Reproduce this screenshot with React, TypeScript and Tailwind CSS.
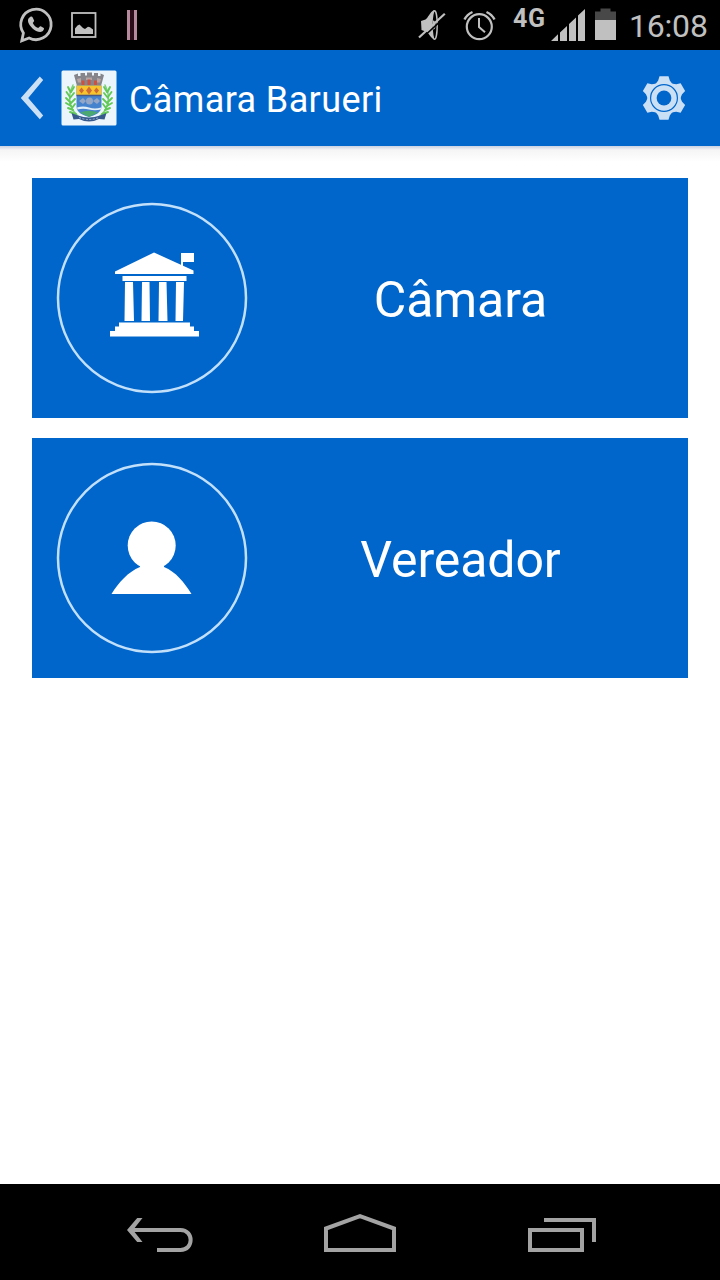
import type { ReactNode } from 'react';

const gearTeeth = [0, 60, 120, 180, 240, 300];

function StatusBar() {
  return (
    <div className="flex h-[50px] shrink-0 bg-black text-[#c0c0c0]">
      {/* Notifications */}
      <svg className="ml-4 h-[50px] w-10" viewBox="16 0 40 50" fill="none">
        <path
          d="M23.4 33A15.2 15.2 0 1 1 29.1 38L21.8 40.8Z"
          stroke="currentColor"
          strokeWidth="2.8"
        />
        <path
          d="M30.2 17C31 16.2 32.2 16.4 32.7 17.4L34.1 20.5C34.4 21.3 33.1 22.3 32.8 23C34 25.6 35.8 27.1 38.2 28C39 27.5 39.8 26 40.7 26.3L43.8 28C44.6 28.7 43.2 31 42 31.6C39.5 32.8 35 30.8 32.3 28.2C29.6 25.5 27.4 22.3 28.1 19.6C28.4 18.5 29.3 17.6 30.2 17Z"
          fill="currentColor"
        />
      </svg>
      <svg className="ml-[14px] h-[50px] w-7" viewBox="70 0 28 50" fill="none">
        <rect x="72" y="13" width="23.5" height="24" stroke="currentColor" strokeWidth="1.8" />
        <path
          d="M75 34V28.5L77.5 25.5L79.5 24.5L83 28L85 29L88 26.8L90 27.2L93 29.5V34Z"
          fill="currentColor"
        />
      </svg>
      <div className="mt-[10px] ml-[29px] flex h-[30px] w-[10px] justify-between bg-[#2a0d18]">
        <div className="w-[3px] bg-[#b58a9c]" />
        <div className="w-[3px] bg-[#b58a9c]" />
      </div>

      {/* System icons */}
      <svg className="ml-[279px] h-[50px] w-8" viewBox="416 0 32 50" fill="none">
        <path
          d="M421 21L425.500 19.5C428 18 430 12 434 10V39.5C431 38 429 34 427 32L421.5 30Z"
          fill="currentColor"
        />
        <ellipse cx="434.6" cy="25" rx="2.6" ry="14.3" fill="black" stroke="currentColor" strokeWidth="1.4" />
        <path d="M433 20.500A2.500 4.500 0 0 1 433 29.500Z" fill="currentColor" />
        <path d="M420.5 39.5L446 16.2" stroke="black" strokeWidth="1.6" />
        <path d="M419 37.5L444.8 13.8" stroke="currentColor" strokeWidth="2.2" />
      </svg>
      <svg className="ml-[14px] h-[50px] w-9" viewBox="462 0 36 50" fill="none" stroke="currentColor">
        <circle cx="479.3" cy="26.7" r="12.5" strokeWidth="2.2" />
        <path d="M479 18V27L485 32.2" strokeWidth="2" />
        <path d="M464.5 19.5Q467 14.5 472.5 12M486.5 12Q492 14.5 494.5 19.5" strokeWidth="2.4" />
      </svg>
      <span className="mt-[5px] ml-[15px] w-[38px] text-[25px] leading-7 font-bold tracking-[0.6px]">4G</span>
      <svg className="h-[50px] w-[34px]" viewBox="551 0 34 50" fill="currentColor">
        <path d="M551 41L558 34.3V41ZM560 32.5L567 26V41H560ZM569 24L576 17.5V41H569ZM578 15.5L585 9V41H578Z" />
      </svg>
      <svg className="ml-[10px] h-[50px] w-[21px]" viewBox="595 0 21 50">
        <path d="M595 20V11.5H600.5V8.5H610.5V11.5H616V20Z" fill="#484848" />
        <path d="M595 20H616V40H595Z" fill="currentColor" />
      </svg>
      <span className="mt-[7px] ml-[13px] text-[32px] leading-[38px] tracking-[-0.2px]">16:08</span>
    </div>
  );
}

function Crest() {
  return (
    <svg className="ml-4 h-14 w-14" viewBox="0 0 56 56" fill="none">
      <rect x="0.5" y="0.5" width="55" height="55" rx="1.5" fill="#edf5fc" />
      {/* Laurel branches */}
      <g stroke="#7fce7a" strokeWidth="1.5" strokeLinecap="round">
        <path d="M12 15C6 27 8 39 18 47M44 15C50 27 48 39 38 47" />
        <path
          d="M9.500 22L7 17M9 27L5.500 22M9 32L5 28M10 36L5 33M12 40L7 38M15 44L9 42M10 22L13 17M9 28L13 23M9 34L14 29M11 38L14 34"
          stroke="#62c956"
          strokeWidth="1.900"
        />
        <path
          d="M46.500 22L49 17M47 27L50.500 22M47 32L51 28M46 36L51 33M44 40L49 38M41 44L47 42M46 22L43 17M47 28L43 23M47 34L42 29M45 38L42 34"
          stroke="#62c956"
          strokeWidth="1.900"
        />
      </g>
      {/* Mural crown */}
      <path
        d="M13 5L17 3.500V6H19.500V3H24V5.500H26V2.500H31V5.500H33V3H37V6H39.500V3.500L43 5L40 16H16Z"
        fill="#85858b"
      />
      <path d="M16 9L20 8V12.500H17ZM25 7.500H31V10H25ZM36 8L40 9L39 12.500H36Z" fill="#b7a5a4" />
      <path d="M20.5 10.500H23.500V15H20.5ZM26.500 9.500H29.500V15H26.500ZM33 10.500H36V15H33Z" fill="#d0503f" />
      {/* Shield */}
      <path d="M15.500 15.500H40.500V36C40.500 43 34 45 28 47C22 45 15.500 43 15.500 36Z" fill="#4583ce" />
      <path d="M15.500 15.500H40.500V25H15.500Z" fill="#f7c42e" />
      <path d="M18 20.500L20.5 17.500L23 20.500L20.5 23.500ZM25 20.500L28 16.500L31 20.500L28 24.500ZM33 20.500L35.500 17.500L38 20.500L35.5 23.500Z" fill="#d06b36" />
      <path d="M15.500 24.700H40.500V26.200H15.500Z" fill="#4b5a86" />
      <path d="M18 31L22 28L25 31L22 34ZM25 31A3.5 3.5 0 1 1 32 31A3.5 3.5 0 1 1 25 31ZM32 31L36 28L39 31L36 34Z" fill="#94a6c6" />
      <path d="M16 37.500Q22 35.500 28 37.500T40 37.500V39.500Q34 41 28 39.500T16.500 39.500Z" fill="#e1eef8" />
      <path d="M19 42.500Q28 39 37 42.500L28 47Z" fill="#4aa870" />
      {/* Ribbon */}
      <path
        d="M10.500 43L17 45.500Q28 49.500 39 45.500L45.500 43L43.500 49.500L38 49Q28 54 18 49L12.500 49.500Z"
        fill="#365a8e"
      />
      <path d="M18 47.5Q28 51.5 38 47.5" stroke="#9fb2d0" strokeDasharray="2 1.5" />
    </svg>
  );
}

function ActionBar() {
  return (
    <header className="flex h-24 shrink-0 items-center bg-[#0066cc] text-white">
      <svg className="ml-5 h-12 w-[25px]" viewBox="20 74 25 48">
        <path d="M39.8 76.500L43.200 80L28.200 98L43.200 115.500L39.8 119.200L20.800 98Z" fill="#cce0f5" />
      </svg>
      <Crest />
      <h1 className="mt-[3px] ml-3 text-[36px] leading-[42px] tracking-[0.38px]">Câmara Barueri</h1>
      <svg className="mr-8 ml-auto h-12 w-12" viewBox="-24 -24 48 48" fill="#cce0f5">
        {gearTeeth.map((angle) => (
          <path key={angle} d="M-8 -14.500L-5.800 -17.500L-4.5 -21.800H4.5L5.800 -17.500L8 -14.500Z" transform={`rotate(${angle})`} />
        ))}
        <circle r="16.800" />
        <circle r="13.4" fill="none" stroke="#0066cc" strokeWidth="1.2" />
        <circle r="7.4" fill="#0066cc" />
      </svg>
    </header>
  );
}

function MenuCard({ label, children }: { label: string; children: ReactNode }) {
  return (
    <button className="flex h-60 w-full items-center bg-[#0066cc] text-white">
      <svg className="h-60 w-60 shrink-0" viewBox="0 0 240 240" fill="white">
        <circle cx="120" cy="120" r="94" fill="none" stroke="#c2e0fa" strokeWidth="2.5" />
        {children}
      </svg>
      <span className="flex-1 pt-1 pr-[39px] text-center text-[50px] leading-[60px] tracking-[-0.1px]">{label}</span>
    </button>
  );
}

function NavBar() {
  return (
    <nav className="flex h-24 shrink-0 items-center bg-black text-[#a3a3a3]">
      <svg className="ml-[126px] h-24 w-[68px]" viewBox="126 1184 68 96" fill="none" stroke="currentColor" strokeWidth="4">
        <path d="M157 1250H180.5C194 1250 194 1230 180.5 1230H131" />
        <path d="M137.2 1218H142.5L133 1230L142.5 1242H137.2L127 1230Z" fill="currentColor" stroke="none" />
      </svg>
      <svg className="ml-[130px] h-24 w-[72px]" viewBox="324 1184 72 96" fill="none" stroke="currentColor" strokeWidth="4">
        <path d="M326 1250V1228.5L360 1216.2L394 1228.5V1250Z" />
      </svg>
      <svg className="ml-[132px] h-24 w-[68px]" viewBox="528 1184 68 96" fill="none" stroke="currentColor" strokeWidth="4">
        <path d="M530 1230H582V1250H530ZM544 1220H594V1242" />
      </svg>
    </nav>
  );
}

export default function App() {
  return (
    <div className="flex h-[1280px] w-[720px] flex-col overflow-hidden bg-white font-['Roboto',sans-serif]">
      <StatusBar />
      <ActionBar />
      <div className="h-4 shrink-0 bg-linear-to-b from-[#c9d1e3] via-[#f5f5f6] via-25% to-white" />

      <main className="flex flex-1 flex-col gap-5 px-8 pt-4">
        <MenuCard label="Câmara">
          <path d="M83 93.5L122 74.5L161.5 92.5V96H83Z" />
          <path d="M149 90V75H162V84H151V91Z" />
          <path d="M90.5 98H154.5V103H90.5Z" />
          <path d="M93 104H101L102 143H92.5ZM110 104H117.500L118 143H109.5ZM127 104H134.500L135.5 143H126.5ZM144 104H152L151 143H143.5Z" />
          <path d="M87 144.5H158V148.5H162V153H167V158.5H78V153H83V148.5H87Z" />
        </MenuCard>
        <MenuCard label="Vereador">
          <circle cx="119.7" cy="107.5" r="24" />
          <path d="M79.5 156C87 144 96 134 108 129V124H132V129C144 134 152 144 159.5 156Z" />
        </MenuCard>
      </main>

      <NavBar />
    </div>
  );
}
